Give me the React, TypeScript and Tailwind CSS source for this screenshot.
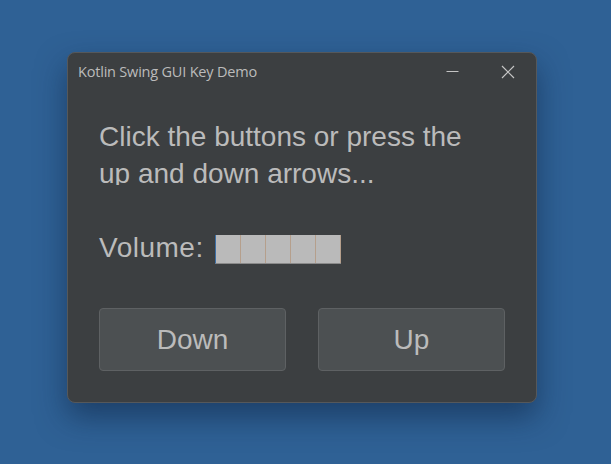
const App = () => {
  const cells = [0, 1, 2, 3, 4];

  return (
    <div className="w-[611px] h-[464px] bg-[#2f6195] flex items-start pl-[67px] pt-[52px] font-['Liberation_Sans',Arial,sans-serif]">
      <div className="w-[470px] h-[351px] bg-[#3c3f41] rounded-[8px] border border-[#55585b] shadow-[0_14px_30px_rgba(10,30,60,0.5)] flex flex-col overflow-hidden">
        {/* title bar */}
        <div className="h-[37px] flex items-center pl-[10px] pr-[21px] shrink-0">
          <span className="text-[14.5px] text-[#bbbbbb] font-['Open_Sans','Liberation_Sans',sans-serif] tracking-[-0.2px] flex-1">
            Kotlin Swing GUI Key Demo
          </span>
          <svg width="13" height="13" viewBox="0 0 13 13" className="mr-[42px]">
            <line x1="0.5" y1="6.5" x2="12.5" y2="6.5" stroke="#c4c4c4" strokeWidth="1" />
          </svg>
          <svg width="14" height="14" viewBox="0 0 14 14">
            <path d="M1 1 L13 13 M13 1 L1 13" stroke="#c4c4c4" strokeWidth="1.2" />
          </svg>
        </div>

        <div className="flex flex-col px-[31px] pt-[28px]">
          <div className="h-[67px] overflow-hidden text-[28px] leading-[37px] text-[#bbbbbb]">
            Click the buttons or press the
            <br />
            up and down arrows...
          </div>

          <div className="flex items-start mt-[44px]">
            <span className="text-[28px] leading-[37px] tracking-[0.5px] text-[#bbbbbb]">Volume:</span>
            <div className="ml-[11px] mt-[6px] h-[29px] flex bg-[#bababa] border-l border-l-[#3b6ea5] border-b border-b-[#8a8a8a]">
              {cells.map((i) => (
                <div key={i} className="w-[25px] h-full border-r border-r-[#b59f8c]" />
              ))}
            </div>
          </div>

          <div className="flex gap-[32px] mt-[42px]">
            <button className="w-[187px] h-[63px] bg-[#4c5052] border border-[#5e6163] rounded-[4px] text-[28px] text-[#bbbbbb]">
              Down
            </button>
            <button className="w-[187px] h-[63px] bg-[#4c5052] border border-[#5e6163] rounded-[4px] text-[28px] text-[#bbbbbb]">
              Up
            </button>
          </div>
        </div>
      </div>
    </div>
  );
};

export default App;
